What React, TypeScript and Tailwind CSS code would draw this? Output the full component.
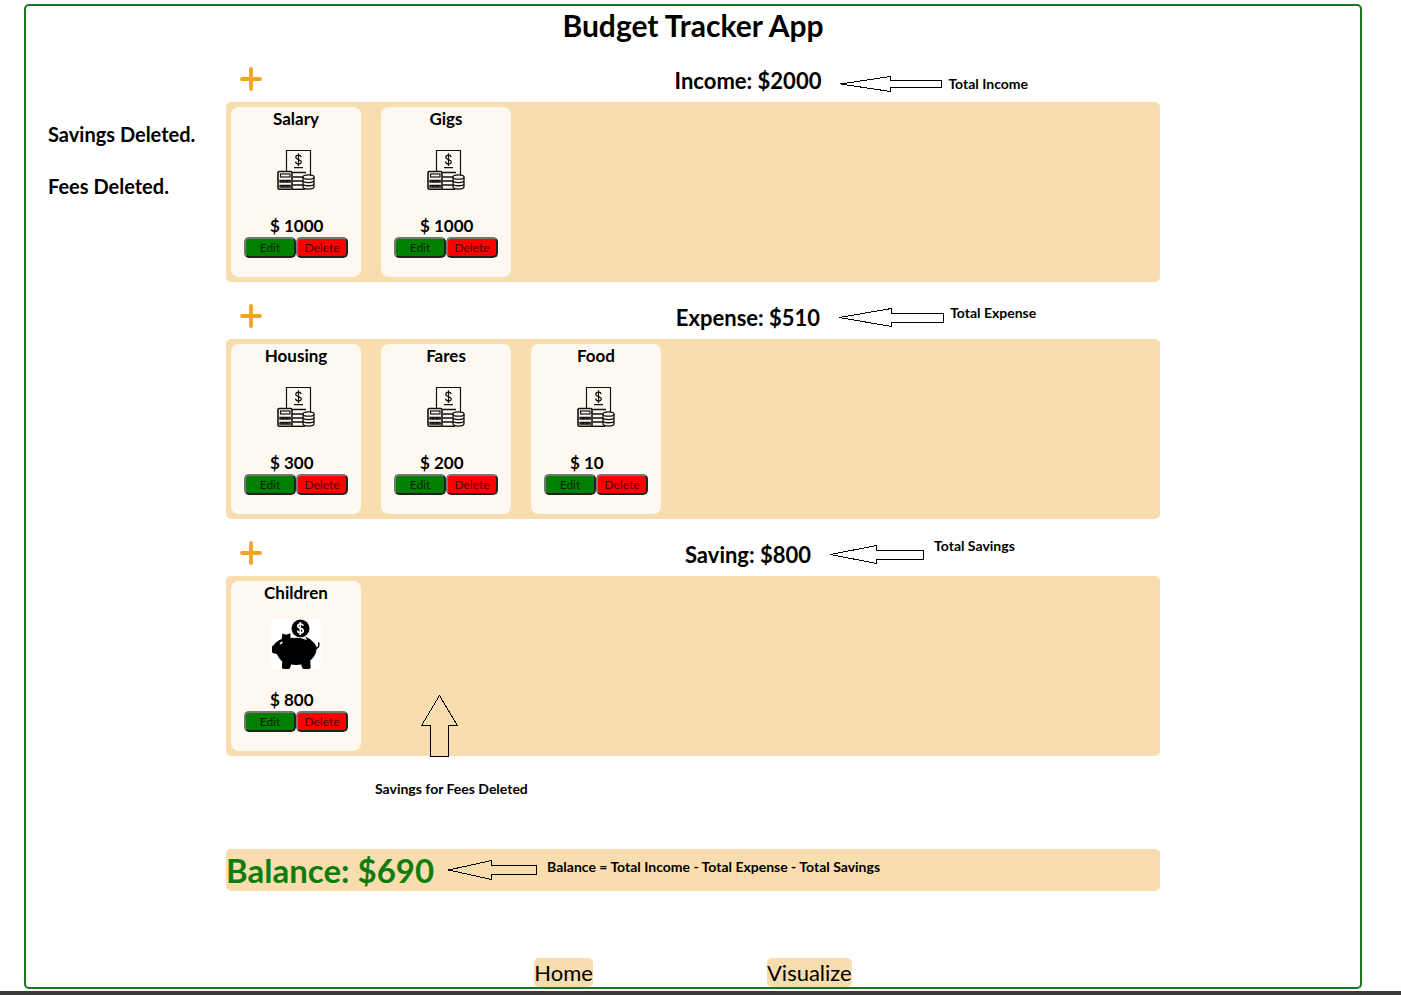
import React from "react";

type Entry = { name: string; amount: number };

type Category = {
  label: string;
  total: number;
  entries: Entry[];
  icon: "ledger" | "piggy";
  note: string;
  noteClass: string;
  noteTextClass: string;
  arrow: ArrowProps;
};

type ArrowProps = { width: number; head: number; height: number; shaft: number };

const categories: Category[] = [
  {
    label: "Income",
    total: 2000,
    entries: [
      { name: "Salary", amount: 1000 },
      { name: "Gigs", amount: 1000 },
    ],
    icon: "ledger",
    note: "Total Income",
    noteClass: "top-4 gap-1.5",
    noteTextClass: "",
    arrow: { width: 102, head: 51, height: 16, shaft: 7 },
  },
  {
    label: "Expense",
    total: 510,
    entries: [
      { name: "Housing", amount: 300 },
      { name: "Fares", amount: 200 },
      { name: "Food", amount: 10 },
    ],
    icon: "ledger",
    note: "Total Expense",
    noteClass: "top-2 gap-1.5",
    noteTextClass: "pb-2",
    arrow: { width: 105, head: 53, height: 19, shaft: 9 },
  },
  {
    label: "Saving",
    total: 800,
    entries: [{ name: "Children", amount: 800 }],
    icon: "piggy",
    note: "Total Savings",
    noteClass: "top-1 gap-2.5",
    noteTextClass: "pb-4",
    arrow: { width: 94, head: 47, height: 19, shaft: 9 },
  },
];

function LeftArrow({ width, head, height, shaft }: ArrowProps) {
  const right = width - 0.5;
  const bottom = height - 0.5;
  const middle = height / 2;
  const top = Math.floor((height - shaft) / 2) + 0.5;
  const low = top + shaft;
  return (
    <svg
      width={width}
      height={height}
      viewBox={`0 0 ${width} ${height}`}
      fill="none"
      stroke="black"
      className="shrink-0"
      shapeRendering="crispEdges"
      aria-hidden="true"
    >
      <path
        d={`M.5 ${middle} L${head - 0.5} .5 V${top} H${right} V${low} H${head - 0.5} V${bottom} Z`}
      />
    </svg>
  );
}

function UpArrow() {
  return (
    <svg
      width="37"
      height="63"
      viewBox="0 0 37 63"
      fill="none"
      stroke="black"
      shapeRendering="crispEdges"
      aria-hidden="true"
    >
      <path d="M18.5 .5 L36.5 30.5 H27.5 V61.5 H9.5 V30.5 H.5 Z" />
    </svg>
  );
}

function LedgerIcon() {
  return (
    <svg width="50" height="50" viewBox="0 0 50 50" fill="none" stroke="#111" aria-hidden="true">
      <path d="M15.5 26V5.5H39.5V30" strokeWidth="1.2" />
      <path
        d="M30.2 12.2c-.3-1.4-1.3-2-2.7-2-1.6 0-2.7.8-2.7 2.1 0 3 5.5 1.5 5.5 4.5 0 1.4-1.2 2.2-2.8 2.2-1.7 0-2.8-.8-3-2.300M27.500 8.300v12.600"
        strokeWidth="1.2"
      />
      <path d="M23 22.6H32M21.5 27.500H35M21.500 32H32M21.500 36H32M21.500 40H32" strokeWidth="1.3" />
      <path d="M21 44.3H34" strokeWidth="1.4" />
      <rect x="7" y="26.5" width="14" height="17.8" rx="1.2" strokeWidth="1.6" />
      <rect x="9.5" y="29" width="9.5" height="3" strokeWidth="1.2" />
      <path
        d="M9 35.300h2.600v1.700H9zM12.800 35.300h2.600v1.700h-2.600zM16.600 35.300h2.600v1.700h-2.600zM9 40.300h2.600v1.700H9zM12.800 40.300h2.600v1.700h-2.600zM16.600 40.300h2.600v1.700h-2.600z"
        strokeWidth="1.3"
      />
      <ellipse cx="37.5" cy="32" rx="5.5" ry="2.2" strokeWidth="1.3" />
      <path
        d="M32 32v9.500c0 3.500 11 3.500 11 0V32M32 35.300c0 3 11 3 11 0M32 38.500c0 3 11 3 11 0"
        strokeWidth="1.3"
      />
    </svg>
  );
}

function PiggyIcon() {
  return (
    <svg width="50" height="50" viewBox="0 0 50 50" aria-hidden="true">
      <rect width="50" height="50" fill="white" />
      <circle cx="29.5" cy="9.5" r="9" />
      <path
        d="M32.300 6.800c-.4-1.300-1.500-1.800-2.800-1.800-1.600 0-2.700.8-2.700 2 0 2.900 5.500 1.600 5.500 4.700 0 1.300-1.200 2.200-2.800 2.200-1.700 0-2.800-.8-3-2.300M29.300 3v13"
        fill="none"
        stroke="white"
        strokeWidth="1.6"
      />
      <path d="M11.500 14.500l3.800 1.300 4-1.600.3 5c2.500-.8 5-1.200 7.600-1 3.400.2 6.200 1.200 8.800 2.800l-1.700-3.400 4.500 2.300c3.700 3 6.300 5.600 6.900 8.600 1.400-1 1.700-2.600 1.200-5l1.400-.2c.8 3.600-.2 6-2.700 6.800-.3 4.700-3 8.800-6.400 11.600l.5 6.300c0 1.300-.8 2-2 2h-4.500c-1.300 0-2-.8-2.300-2l-.7-2.500c-3.300.6-7 .5-10.200 0l-.6 2.500c-.3 1.200-1 2-2.300 2h-4.200c-1.300 0-2-.8-2-2l.4-5.500c-2.300-2-4.200-4.600-5.500-7.500l-3.300-.8c-1-.3-1.500-.8-1.500-1.800v-4.200c0-1.200.6-1.800 1.700-2 1.800-2.600 4-4.500 8-6.200z" />
      <path d="M8.600 25.200c.3-1.500 1.200-2.400 2.700-2.700l.4 1.400c-.9.1-1.500.7-1.900 1.700z" fill="white" />
      <path d="M22 18.800c4-1 8.500-.4 12.500 1.500" fill="none" stroke="white" strokeWidth=".9" />
    </svg>
  );
}

function EntryCard({ entry, icon }: { entry: Entry; icon: Category["icon"] }) {
  const button =
    "h-[21px] w-[52px] rounded-[5px] border-2 border-t-[#767676] border-l-[#767676] border-r-[#222] border-b-[#222] text-center text-[12px] leading-4 text-black/75";
  return (
    <article className="flex h-[170px] w-[130px] flex-col rounded-lg bg-[#fef9f0]">
      <h3 className="text-center text-[17px] leading-6 font-bold">{entry.name}</h3>
      <div className="flex justify-center pt-[14px]">
        {icon === "ledger" ? <LedgerIcon /> : <PiggyIcon />}
      </div>
      <p className="mt-5 pl-[39px] text-[17px] leading-[22px] font-bold">$ {entry.amount}</p>
      <div className="flex justify-center">
        <button type="button" className={`${button} bg-[#008000]`}>
          Edit
        </button>
        <button type="button" className={`${button} bg-[#ff0000]`}>
          Delete
        </button>
      </div>
    </article>
  );
}

function CategorySection({ category }: { category: Category }) {
  return (
    <section>
      <header className="flex h-[57px] items-end">
        <button
          type="button"
          aria-label={`Add ${category.label}`}
          className="flex h-[46px] w-[50px] items-center justify-center"
        >
          <svg
            width="24"
            height="24"
            viewBox="0 0 24 24"
            stroke="#f0a520"
            strokeWidth="3.8"
            strokeLinecap="round"
            aria-hidden="true"
          >
            <path d="M12 2V22M3 12H21" />
          </svg>
        </button>
        <div className="ml-[60px] flex flex-1 justify-center">
          <div className="relative">
            <h2 className="text-[22px] leading-[42px] font-bold">
              {category.label}: ${category.total}
            </h2>
            <div className={`absolute left-full ml-[19px] flex items-center whitespace-nowrap ${category.noteClass}`}>
              <LeftArrow {...category.arrow} />
              <span className={`text-[14px] leading-4 font-bold ${category.noteTextClass}`}>{category.note}</span>
            </div>
          </div>
        </div>
      </header>
      <div className="flex min-h-[180px] flex-wrap gap-5 rounded-[5px] bg-[#f8deae] p-[5px]">
        {category.entries.map((entry) => (
          <EntryCard key={entry.name} entry={entry} icon={category.icon} />
        ))}
      </div>
    </section>
  );
}

export default function App() {
  return (
    <div className="bg-white pt-1 font-['Lato',sans-serif] text-black">
      <div className="mr-[39px] ml-6 rounded-[5px] border-2 border-[#1b751f]">
        <h1 className="text-center text-[30px] leading-[39px] font-bold">Budget Tracker App</h1>
        <div className="grid grid-cols-[200px_1fr_200px]">
          <aside className="flex flex-col gap-7 pt-[77px] pl-[22px] text-[20px] leading-6 font-bold">
            <p>Savings Deleted.</p>
            <p>Fees Deleted.</p>
          </aside>
          <main>
            <div className="relative">
              {categories.map((category) => (
                <CategorySection key={category.label} category={category} />
              ))}
              <div className="absolute top-full left-[149px] -mt-[61px] flex flex-col">
                <div className="pl-[46px]">
                  <UpArrow />
                </div>
                <span className="mt-[23px] text-[14px] leading-4 font-bold">Savings for Fees Deleted</span>
              </div>
            </div>
            <div className="mt-[93px] flex h-[42px] items-center rounded-[5px] bg-[#f8deae]">
              <h2 className="text-[33px] leading-[42px] font-bold text-[#107c10]">Balance: $690</h2>
              <div className="ml-[14px] flex items-center gap-2.5">
                <LeftArrow width={89} head={44} height={20} shaft={9} />
                <span className="pb-1.5 text-[14px] leading-4 font-bold">
                  Balance = Total Income - Total Expense - Total Savings
                </span>
              </div>
            </div>
            <nav className="mt-[67px] flex justify-center gap-[174px] text-[22px] leading-[29px]">
              <a href="#home" className="rounded-[5px] bg-[#f8deae]">
                Home
              </a>
              <a href="#visualize" className="rounded-[5px] bg-[#f8deae]">
                Visualize
              </a>
            </nav>
          </main>
        </div>
      </div>
      <footer className="mt-[2px] h-1 bg-[#3a3a3c]" />
    </div>
  );
}
